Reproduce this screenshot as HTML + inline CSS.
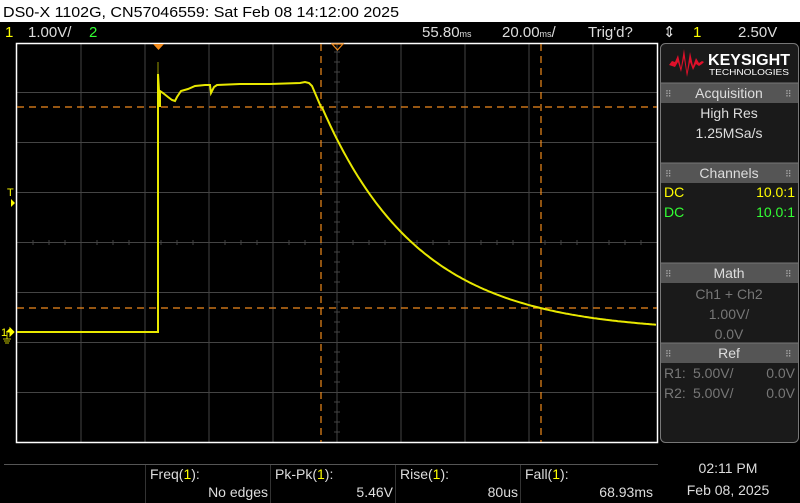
<!DOCTYPE html>
<html><head><style>
body{margin:0;width:800px;height:503px;background:#000;overflow:hidden;font-family:"Liberation Sans Narrow","Liberation Sans",sans-serif;}
</style></head><body>
<svg width="800" height="503" xmlns="http://www.w3.org/2000/svg" style="position:absolute;left:0;top:0" font-family="Liberation Sans Narrow, Liberation Sans, sans-serif">
<rect x="0" y="0" width="800" height="22" fill="#fff"/>
<text x="3" y="17" font-size="15" fill="#000" textLength="396" lengthAdjust="spacingAndGlyphs">DS0-X 1102G, CN57046559: Sat Feb 08 14:12:00 2025</text>
<g font-size="15" fill="#ddd">
<text x="5" y="37" fill="#ff0">1</text>
<text x="28" y="37">1.00V/</text>
<text x="89" y="37" fill="#3f3">2</text>
<text x="422" y="37">55.80<tspan font-size="9">ms</tspan></text>
<text x="502" y="37">20.00<tspan font-size="9">ms</tspan>/</text>
<text x="588" y="37">Trig'd?</text>
<text x="663" y="37">⇕</text>
<text x="693" y="37" fill="#ff0">1</text>
<text x="738" y="37">2.50V</text>
</g>
<g stroke="#444" stroke-width="1">
<line x1="81" y1="43" x2="81" y2="443"/><line x1="145" y1="43" x2="145" y2="443"/><line x1="209" y1="43" x2="209" y2="443"/><line x1="273" y1="43" x2="273" y2="443"/><line x1="337" y1="43" x2="337" y2="443"/><line x1="401" y1="43" x2="401" y2="443"/><line x1="465" y1="43" x2="465" y2="443"/><line x1="529" y1="43" x2="529" y2="443"/><line x1="593" y1="43" x2="593" y2="443"/>
<line x1="16" y1="92.5" x2="658" y2="92.5"/><line x1="16" y1="142.5" x2="658" y2="142.5"/><line x1="16" y1="192.5" x2="658" y2="192.5"/><line x1="16" y1="242.5" x2="658" y2="242.5"/><line x1="16" y1="292.5" x2="658" y2="292.5"/><line x1="16" y1="342.5" x2="658" y2="342.5"/><line x1="16" y1="392.5" x2="658" y2="392.5"/>
</g>
<g stroke="#444" stroke-width="1">
<path d="M33 240v5M49 240v5M65 240v5M97 240v5M113 240v5M129 240v5M161 240v5M177 240v5M193 240v5M225 240v5M241 240v5M257 240v5M289 240v5M305 240v5M321 240v5M353 240v5M369 240v5M385 240v5M417 240v5M433 240v5M449 240v5M481 240v5M497 240v5M513 240v5M545 240v5M561 240v5M577 240v5M609 240v5M625 240v5M641 240v5"/>
<path d="M334 52h6M334 62h6M334 72h6M334 82h6M334 102h6M334 112h6M334 122h6M334 132h6M334 152h6M334 162h6M334 172h6M334 182h6M334 202h6M334 212h6M334 222h6M334 232h6M334 252h6M334 262h6M334 272h6M334 282h6M334 302h6M334 312h6M334 322h6M334 332h6M334 352h6M334 362h6M334 372h6M334 382h6M334 402h6M334 412h6M334 422h6M334 432h6"/>
</g>
<rect x="16.5" y="43.5" width="641" height="399" fill="none" stroke="#fff" stroke-width="1.5"/>
<g stroke="#f08a1c" stroke-width="1.2" stroke-dasharray="7,5" fill="none">
<line x1="17" y1="107" x2="657" y2="107"/><line x1="17" y1="308" x2="657" y2="308"/>
<line x1="321" y1="44" x2="321" y2="442"/><line x1="541" y1="44" x2="541" y2="442"/>
</g>
<path d="M153 44h11l-5.5 6z" fill="#f08a1c"/>
<path d="M332 44h11l-5.5 6z" fill="none" stroke="#f08a1c" stroke-width="1.2"/>
<line x1="158" y1="62" x2="158" y2="332" stroke="#9a9a00" stroke-width="1"/>
<polyline fill="none" stroke="#e8e800" stroke-width="2" points="17,332 157,332 158,332 158,74 159,91 160,107 160,91 163,93 168,97 172,100 175,101 177,97 181,91 188,89 195,86 205,85 210,85 211,93 214,87 217,85 240,84 270,84 300,83 305,82 309,83 312,86 321,107 __EXP__"/>
<script>
(function(){var p=[];for(var x=322;x<=656;x+=2){var y=332-249*Math.exp(-(x-312)/97.6);p.push(x+","+y.toFixed(1));}
var pl=document.querySelectorAll("polyline")[0];pl.setAttribute("points",pl.getAttribute("points").replace("__EXP__",p.join(" ")));})();
</script>
<text x="7" y="196" font-size="11" fill="#ff0">T</text>
<path d="M11 199v8l4-4z" fill="#ff0"/>
<text x="1" y="336" font-size="11" fill="#ff0">1</text>
<path d="M6 332h4v-4M10 328l4 4-4 4z" fill="#ff0" stroke="#ff0" stroke-width="1"/>
<path d="M3 339h8M4 341h6M5 343h4M7 333v6" stroke="#ff0" stroke-width="0.8"/>
<rect x="660.5" y="43.5" width="138" height="399" rx="5" fill="#1a1a1a" stroke="#777"/>
<path d="M669 65 L672 61 L675 62 L678 55 L681 68 L684 49 L687 72 L690 52 L693 66 L696 58 L699 63 L702 61 L704 62 L702 64 L699 66 L696 64 L693 70 L690 62 L687 77 L684 58 L681 72 L678 62 L675 67 L672 66 Z" fill="#e0102a"/>
<text x="708" y="65" font-family="Liberation Sans, sans-serif" font-weight="bold" font-size="16" fill="#fff" textLength="82" lengthAdjust="spacingAndGlyphs">KEYSIGHT</text>
<text x="709" y="75" font-family="Liberation Sans, sans-serif" font-size="8.5" fill="#fff" textLength="80" lengthAdjust="spacingAndGlyphs">TECHNOLOGIES</text>
<g fill="#555">
<rect x="661" y="83" width="137" height="20"/><rect x="661" y="163" width="137" height="20"/><rect x="661" y="263" width="137" height="20"/><rect x="661" y="343" width="137" height="20"/>
</g>
<g stroke="#777"><line x1="661" y1="83" x2="798" y2="83"/><line x1="661" y1="163" x2="798" y2="163"/><line x1="661" y1="263" x2="798" y2="263"/><line x1="661" y1="343" x2="798" y2="343"/></g>
<g font-size="14" fill="#ddd" text-anchor="middle">
<text x="729" y="98">Acquisition</text><text x="729" y="178">Channels</text><text x="729" y="278">Math</text><text x="729" y="358">Ref</text>
<text x="729" y="118">High Res</text><text x="729" y="138">1.25MSa/s</text>
<g fill="#777"><text x="729" y="299">Ch1 + Ch2</text><text x="729" y="319">1.00V/</text><text x="729" y="339">0.0V</text></g>
</g>
<g font-size="9" fill="#aaa"><text x="665" y="97">⠿</text><text x="785" y="97">⠿</text><text x="665" y="177">⠿</text><text x="785" y="177">⠿</text><text x="665" y="277">⠿</text><text x="785" y="277">⠿</text><text x="665" y="357">⠿</text><text x="785" y="357">⠿</text></g>
<g font-size="14">
<text x="664" y="197" fill="#ff0">DC</text><text x="795" y="197" fill="#ff0" text-anchor="end">10.0:1</text>
<text x="664" y="217" fill="#3f3">DC</text><text x="795" y="217" fill="#3f3" text-anchor="end">10.0:1</text>
<g fill="#777"><text x="664" y="378">R1:</text><text x="693" y="378">5.00V/</text><text x="795" y="378" text-anchor="end">0.0V</text>
<text x="664" y="398">R2:</text><text x="693" y="398">5.00V/</text><text x="795" y="398" text-anchor="end">0.0V</text></g>
</g>
<line x1="4" y1="464.5" x2="658" y2="464.5" stroke="#555"/>
<g stroke="#333"><line x1="145.5" y1="465" x2="145.5" y2="503"/><line x1="270.5" y1="465" x2="270.5" y2="503"/><line x1="395.5" y1="465" x2="395.5" y2="503"/><line x1="520.5" y1="465" x2="520.5" y2="503"/></g>
<g font-size="14" fill="#ddd">
<text x="150" y="479">Freq(<tspan fill="#ff0">1</tspan>):</text><text x="268" y="497" text-anchor="end">No edges</text>
<text x="275" y="479">Pk-Pk(<tspan fill="#ff0">1</tspan>):</text><text x="393" y="497" text-anchor="end">5.46V</text>
<text x="400" y="479">Rise(<tspan fill="#ff0">1</tspan>):</text><text x="518" y="497" text-anchor="end">80us</text>
<text x="525" y="479">Fall(<tspan fill="#ff0">1</tspan>):</text><text x="653" y="497" text-anchor="end">68.93ms</text>
<text x="728" y="473" text-anchor="middle">02:11 PM</text><text x="728" y="495" text-anchor="middle">Feb 08, 2025</text>
</g>
</svg>
</body></html>
